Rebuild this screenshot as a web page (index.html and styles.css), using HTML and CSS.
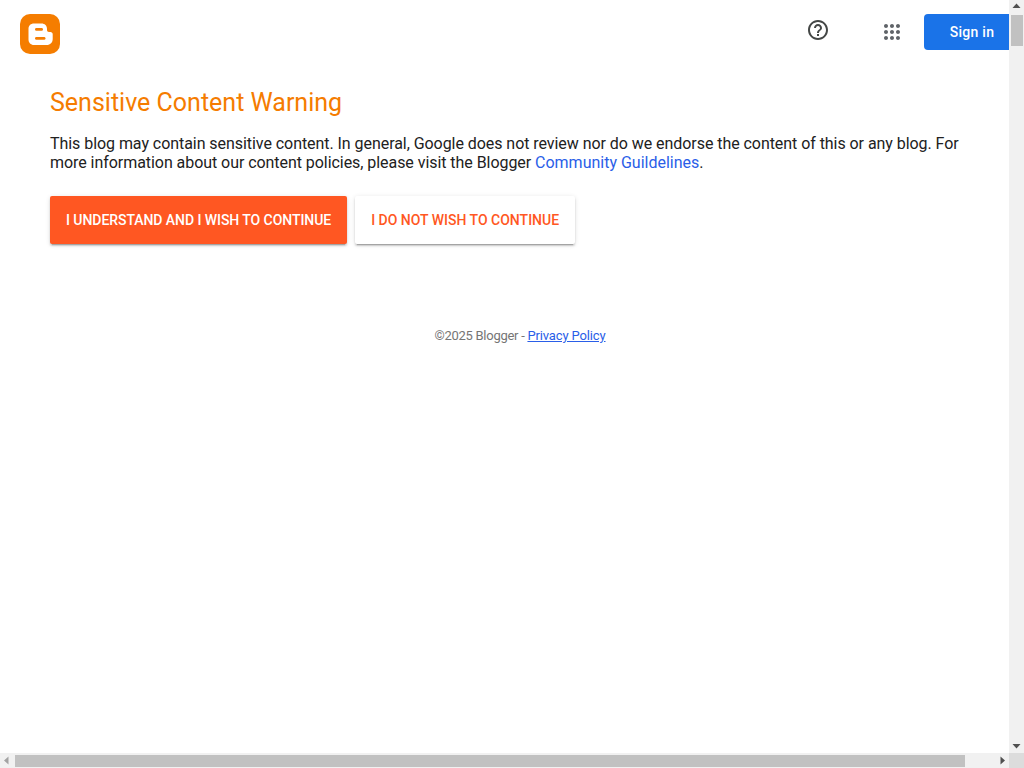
FILE: index.html
```html
<!DOCTYPE html>
<html lang="en">
<head>
<meta charset="utf-8">
<title>Sensitive Content Warning</title>
<link rel="stylesheet" href="styles.css">
</head>
<body>
<div class="window">
  <div class="viewport">
    <div class="content">
      <header class="topbar">
        <a class="logo" href="#" aria-label="Blogger">
          <svg width="40" height="40" viewBox="0 0 40 40">
            <rect width="40" height="40" rx="10" fill="#f57d00"/>
            <path fill="#fff" d="M14 9.500h7.500c3.300 0 5.500 2.200 5.500 5.500v1c0 1.200.8 2 2 2h1.500c1.200 0 2.200 1 2.200 2.200V25c0 3.500-2.500 6-6 6H14c-3.300 0-5.500-2.500-5.500-5.500V15c0-3.300 2.200-5.500 5.500-5.500z"/>
            <rect x="15" y="14" width="8" height="2.800" rx="1.400" fill="#f57d00"/>
            <rect x="15" y="23" width="10.500" height="2.800" rx="1.400" fill="#f57d00"/>
          </svg>
        </a>
        <div class="actions">
          <a class="icon help" href="#" aria-label="Help">
            <svg width="24" height="24" viewBox="0 0 24 24"><path fill="#444746" d="M11 18h2v-2h-2v2zm1-16C6.480 2 2 6.480 2 12s4.480 10 10 10 10-4.480 10-10S17.520 2 12 2zm0 18c-4.410 0-8-3.590-8-8s3.590-8 8-8 8 3.590 8 8-3.590 8-8 8zm0-14c-2.210 0-4 1.790-4 4h2c0-1.100.9-2 2-2s2 .9 2 2c0 2-3 1.750-3 5h2c0-2.250 3-2.500 3-5 0-2.210-1.790-4-4-4z"/></svg>
          </a>
          <a class="icon apps" href="#" aria-label="Google apps">
            <svg width="24" height="24" viewBox="0 0 24 24"><path fill="#5f6368" d="M6 8c1.100 0 2-.9 2-2s-.9-2-2-2-2 .9-2 2 .9 2 2 2zm6 12c1.100 0 2-.9 2-2s-.9-2-2-2-2 .9-2 2 .9 2 2 2zm-6 0c1.100 0 2-.9 2-2s-.9-2-2-2-2 .9-2 2 .9 2 2 2zm0-6c1.100 0 2-.9 2-2s-.9-2-2-2-2 .9-2 2 .9 2 2 2zm6 0c1.100 0 2-.9 2-2s-.9-2-2-2-2 .9-2 2 .9 2 2 2zm4-8c0 1.100.9 2 2 2s2-.9 2-2-.9-2-2-2-2 .9-2 2zm-4 2c1.100 0 2-.9 2-2s-.9-2-2-2-2 .9-2 2 .9 2 2 2zm6 6c1.100 0 2-.9 2-2s-.9-2-2-2-2 .9-2 2 .9 2 2 2zm0 6c1.100 0 2-.9 2-2s-.9-2-2-2-2 .9-2 2 .9 2 2 2z"/></svg>
          </a>
          <a class="signin" href="#">Sign in</a>
        </div>
      </header>
      <main class="page">
        <h1 class="title">Sensitive Content Warning</h1>
        <p class="body-text">This blog may contain sensitive content. In general, Google does not review nor do we endorse the content of this or any blog. For more information about our content policies, please visit the Blogger <a href="#">Community Guildelines</a>.</p>
        <div class="buttons">
          <a class="btn primary" href="#">I UNDERSTAND AND I WISH TO CONTINUE</a>
          <a class="btn secondary" href="#">I DO NOT WISH TO CONTINUE</a>
        </div>
        <p class="footer">©2025 Blogger - <a href="#">Privacy Policy</a></p>
      </main>
    </div>
  </div>
  <div class="vbar">
    <svg class="arrow" width="15" height="15" viewBox="0 0 15 15"><path fill="#505050" d="M7.500 3.500l4 4.500h-8z"/></svg>
    <div class="vthumb"></div>
    <div class="fill"></div>
    <svg class="arrow" width="15" height="15" viewBox="0 0 15 15"><path fill="#505050" d="M3.500 6h8l-4 4.500z"/></svg>
  </div>
  <div class="hbar">
    <svg class="arrow" width="15" height="15" viewBox="0 0 15 15"><path fill="#a3a3a3" d="M4 7.500l4.500-4v8z"/></svg>
    <div class="hthumb"></div>
    <div class="fill"></div>
    <svg class="arrow" width="15" height="15" viewBox="0 0 15 15"><path fill="#505050" d="M11 7.500l-4.500 4v-8z"/></svg>
  </div>
  <div class="corner"></div>
</div>
</body>
</html>
```
FILE: styles.css
```css
html, body { margin: 0; padding: 0; background: #fff; overflow: hidden; }
body { font-family: Roboto, "Liberation Sans", sans-serif; color: #212121; }
a { text-decoration: none; }
.window { display: grid; grid-template-columns: 1fr 15px; grid-template-rows: 1fr 15px; width: 1024px; height: 768px; }
.viewport { overflow: hidden; min-width: 0; min-height: 0; }
.content { width: 1040px; }
.topbar { display: flex; justify-content: space-between; align-items: flex-start; box-sizing: border-box; padding: 14px 20px 0; height: 68px; }
.logo { display: block; width: 40px; height: 40px; }
.actions { display: flex; align-items: flex-start; }
.icon { display: block; width: 24px; height: 24px; }
.help { margin: 4px 0 0; }
.apps { margin: 6px 20px 0 50px; }
.signin { display: block; width: 96px; height: 36px; line-height: 36px; text-align: center; box-sizing: border-box; background: #1a73e8; color: #fff; font-size: 14px; font-weight: 500; letter-spacing: .25px; border-radius: 4px; }
.page { padding: 0 50px; }
.title { margin: 19px 0 0; font-size: 25px; font-weight: 400; line-height: 32px; color: #f57c00; }
.body-text { margin: 15px 0 0; width: 909px; font-size: 16px; line-height: 19px; color: #212121; letter-spacing: -.055px; }
.body-text a { color: #2a5ee8; letter-spacing: 0; }
.buttons { display: flex; gap: 8px; margin-top: 24px; }
.btn { display: block; height: 48px; line-height: 48px; padding: 0 16px; font-size: 14px; font-weight: 500; border-radius: 2px; box-shadow: 0 2px 2px 0 rgba(0,0,0,.14), 0 3px 1px -2px rgba(0,0,0,.2), 0 1px 5px 0 rgba(0,0,0,.12); }
.primary { background: #ff5722; color: #fff; letter-spacing: -.06px; }
.secondary { background: #fff; color: #ff5722; }
.footer { margin: 84px 0 0; text-align: center; font-size: 13px; line-height: 16px; color: #757575; letter-spacing: -.27px; }
.footer a { color: #2a5ee8; text-decoration: underline; letter-spacing: -.14px; }
.vbar { display: flex; flex-direction: column; background: #f1f1f1; }
.hbar { display: flex; background: #f1f1f1; }
.arrow { display: block; flex: none; }
.fill { flex: 1; }
.vthumb { flex: none; width: 15px; height: 31px; background: #c1c1c1; box-sizing: border-box; border-left: 2px solid #f1f1f1; border-right: 1px solid #f1f1f1; }
.hthumb { flex: none; width: 950px; height: 15px; background: #c1c1c1; box-sizing: border-box; border-top: 2px solid #f1f1f1; border-bottom: 1px solid #f1f1f1; }
.corner { background: #dcdcdc; }
```
